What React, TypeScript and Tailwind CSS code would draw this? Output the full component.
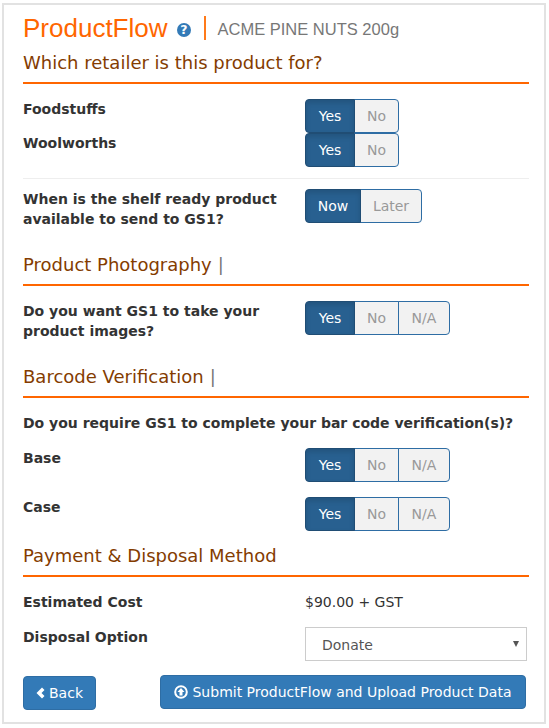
const verdana = "font-['DejaVu_Sans','Liberation_Sans',sans-serif]";

type ToggleProps = {
  options: string[];
  widths: string[];
};

function Toggle({ options, widths }: ToggleProps) {
  return (
    <div className={`flex h-[34px] ${verdana} text-[14px]`}>
      {options.map((option, i) => {
        const active = i === 0;
        const last = i === options.length - 1;
        return (
          <div
            key={option}
            className={`flex items-center justify-center border ${widths[i]} ${
              active
                ? "relative z-10 rounded-l-[4px] border-[#204d74] bg-[#286090] text-white shadow-[inset_0_3px_5px_rgba(0,0,0,0.125)]"
                : "-ml-px border-[#2e6da4] bg-[#f2f2f2] text-[#999999]"
            } ${last ? "rounded-r-[4px]" : ""}`}
          >
            {option}
          </div>
        );
      })}
    </div>
  );
}

function SectionHeading({ title, bar }: { title: string; bar?: boolean }) {
  return (
    <div className="border-b-2 border-[#ff6600] pb-[7px]">
      <h2 className={`${verdana} text-[18px] leading-[24px] text-[#843c00]`}>
        {title}
        {bar && <span className="ml-[6px] text-[#777777]">|</span>}
      </h2>
    </div>
  );
}

function Label({ children }: { children: React.ReactNode }) {
  return (
    <div className={`w-[282px] shrink-0 ${verdana} text-[14px] font-bold leading-[20px] text-[#333333]`}>
      {children}
    </div>
  );
}

function QuestionIcon() {
  return (
    <svg viewBox="0 0 14 14" className="ml-[9px] mt-[3px] h-[14px] w-[14px]">
      <circle cx="7" cy="7" r="7" fill="#337ab7" />
      <text
        x="7"
        y="11.4"
        textAnchor="middle"
        fontSize="12.5"
        fontWeight="700"
        fontFamily="'DejaVu Sans', sans-serif"
        fill="#ffffff"
      >
        ?
      </text>
    </svg>
  );
}

function BackIcon() {
  return (
    <svg viewBox="0 0 9 12" className="h-[12px] w-[9px]">
      <path d="M6 0.5 L8.5 3 L5.5 6 L8.5 9 L6 11.5 L0.5 6 Z" fill="#ffffff" />
    </svg>
  );
}

function UploadIcon() {
  return (
    <svg viewBox="0 0 14 14" className="h-[14px] w-[14px]">
      <circle cx="7" cy="7" r="5.8" fill="none" stroke="#ffffff" strokeWidth="2" />
      <path d="M7 3 L10.5 7 H8.5 V10.5 H5.5 V7 H3.5 Z" fill="#ffffff" />
    </svg>
  );
}

const yesNo = { options: ["Yes", "No"], widths: ["w-[50px]", "w-[45px]"] };
const yesNoNa = { options: ["Yes", "No", "N/A"], widths: ["w-[50px]", "w-[45px]", "w-[52px]"] };

export default function App() {
  return (
    <div className="h-[728px] w-[549px] overflow-hidden bg-white">
      <div className="ml-[2px] mt-[3px] h-[721px] w-[544px] border-2 border-[#e2e2e2] pl-[19px] pr-[15px] pt-[6px]">
        <div className="flex h-[34px] items-center font-['Liberation_Sans',sans-serif]">
          <span className="text-[26px] leading-[34px] text-[#ff6600]">ProductFlow</span>
          <QuestionIcon />
          <span className="ml-[13px] h-[24px] w-[2px] bg-[#ff7a1a]" />
          <span className="ml-[12px] mt-[2px] text-[16.5px] text-[#777777]">ACME PINE NUTS 200g</span>
        </div>

        <div className="mt-[6px]">
          <SectionHeading title="Which retailer is this product for?" />
        </div>

        <div className="mt-[15px] flex">
          <Label>Foodstuffs</Label>
          <Toggle {...yesNo} />
        </div>
        <div className="flex">
          <Label>Woolworths</Label>
          <Toggle {...yesNo} />
        </div>

        <div className="mt-[11px] border-t border-[#eeeeee] pt-[10px]">
          <div className="flex">
            <Label>
              When is the shelf ready product
              <br />
              available to send to GS1?
            </Label>
            <Toggle options={["Now", "Later"]} widths={["w-[56px]", "w-[62px]"]} />
          </div>
        </div>

        <div className="mt-[24px]">
          <SectionHeading title="Product Photography" bar />
        </div>
        <div className="mt-[15px] flex">
          <Label>
            Do you want GS1 to take your
            <br />
            product images?
          </Label>
          <Toggle {...yesNoNa} />
        </div>

        <div className="mt-[24px]">
          <SectionHeading title="Barcode Verification" bar />
        </div>
        <div className={`mt-[15px] ${verdana} text-[14px] font-bold leading-[20px] text-[#333333]`}>
          Do you require GS1 to complete your bar code verification(s)?
        </div>
        <div className="mt-[15px] flex">
          <Label>Base</Label>
          <Toggle {...yesNoNa} />
        </div>
        <div className="mt-[15px] flex">
          <Label>Case</Label>
          <Toggle {...yesNoNa} />
        </div>

        <div className="mt-[13px]">
          <SectionHeading title="Payment & Disposal Method" />
        </div>
        <div className="mt-[15px] flex">
          <Label>Estimated Cost</Label>
          <div className={`${verdana} text-[14px] leading-[20px] text-[#333333]`}>$90.00 + GST</div>
        </div>
        <div className="mt-[15px] flex">
          <Label>Disposal Option</Label>
          <div className={`relative flex h-[34px] w-[222px] items-center border border-[#cccccc] pl-[16px] pt-[2px] ${verdana} text-[14px] text-[#555555]`}>
            Donate
            <span className="absolute right-[7px] top-[13px] border-x-[3px] border-t-[6px] border-x-transparent border-t-[#555555]" />
          </div>
        </div>

        <div className={`mt-[14px] flex items-start justify-between pr-[3px] ${verdana} text-[14px] text-white`}>
          <div className="mt-[1px] flex h-[34px] w-[73px] items-center justify-center gap-[4px] rounded-[4px] border border-[#2e6da4] bg-[#337ab7]">
            <BackIcon />
            Back
          </div>
          <div className="flex h-[34px] w-[366px] items-center justify-center gap-[4px] rounded-[4px] border border-[#2e6da4] bg-[#337ab7]">
            <UploadIcon />
            Submit ProductFlow and Upload Product Data
          </div>
        </div>
      </div>
    </div>
  );
}
